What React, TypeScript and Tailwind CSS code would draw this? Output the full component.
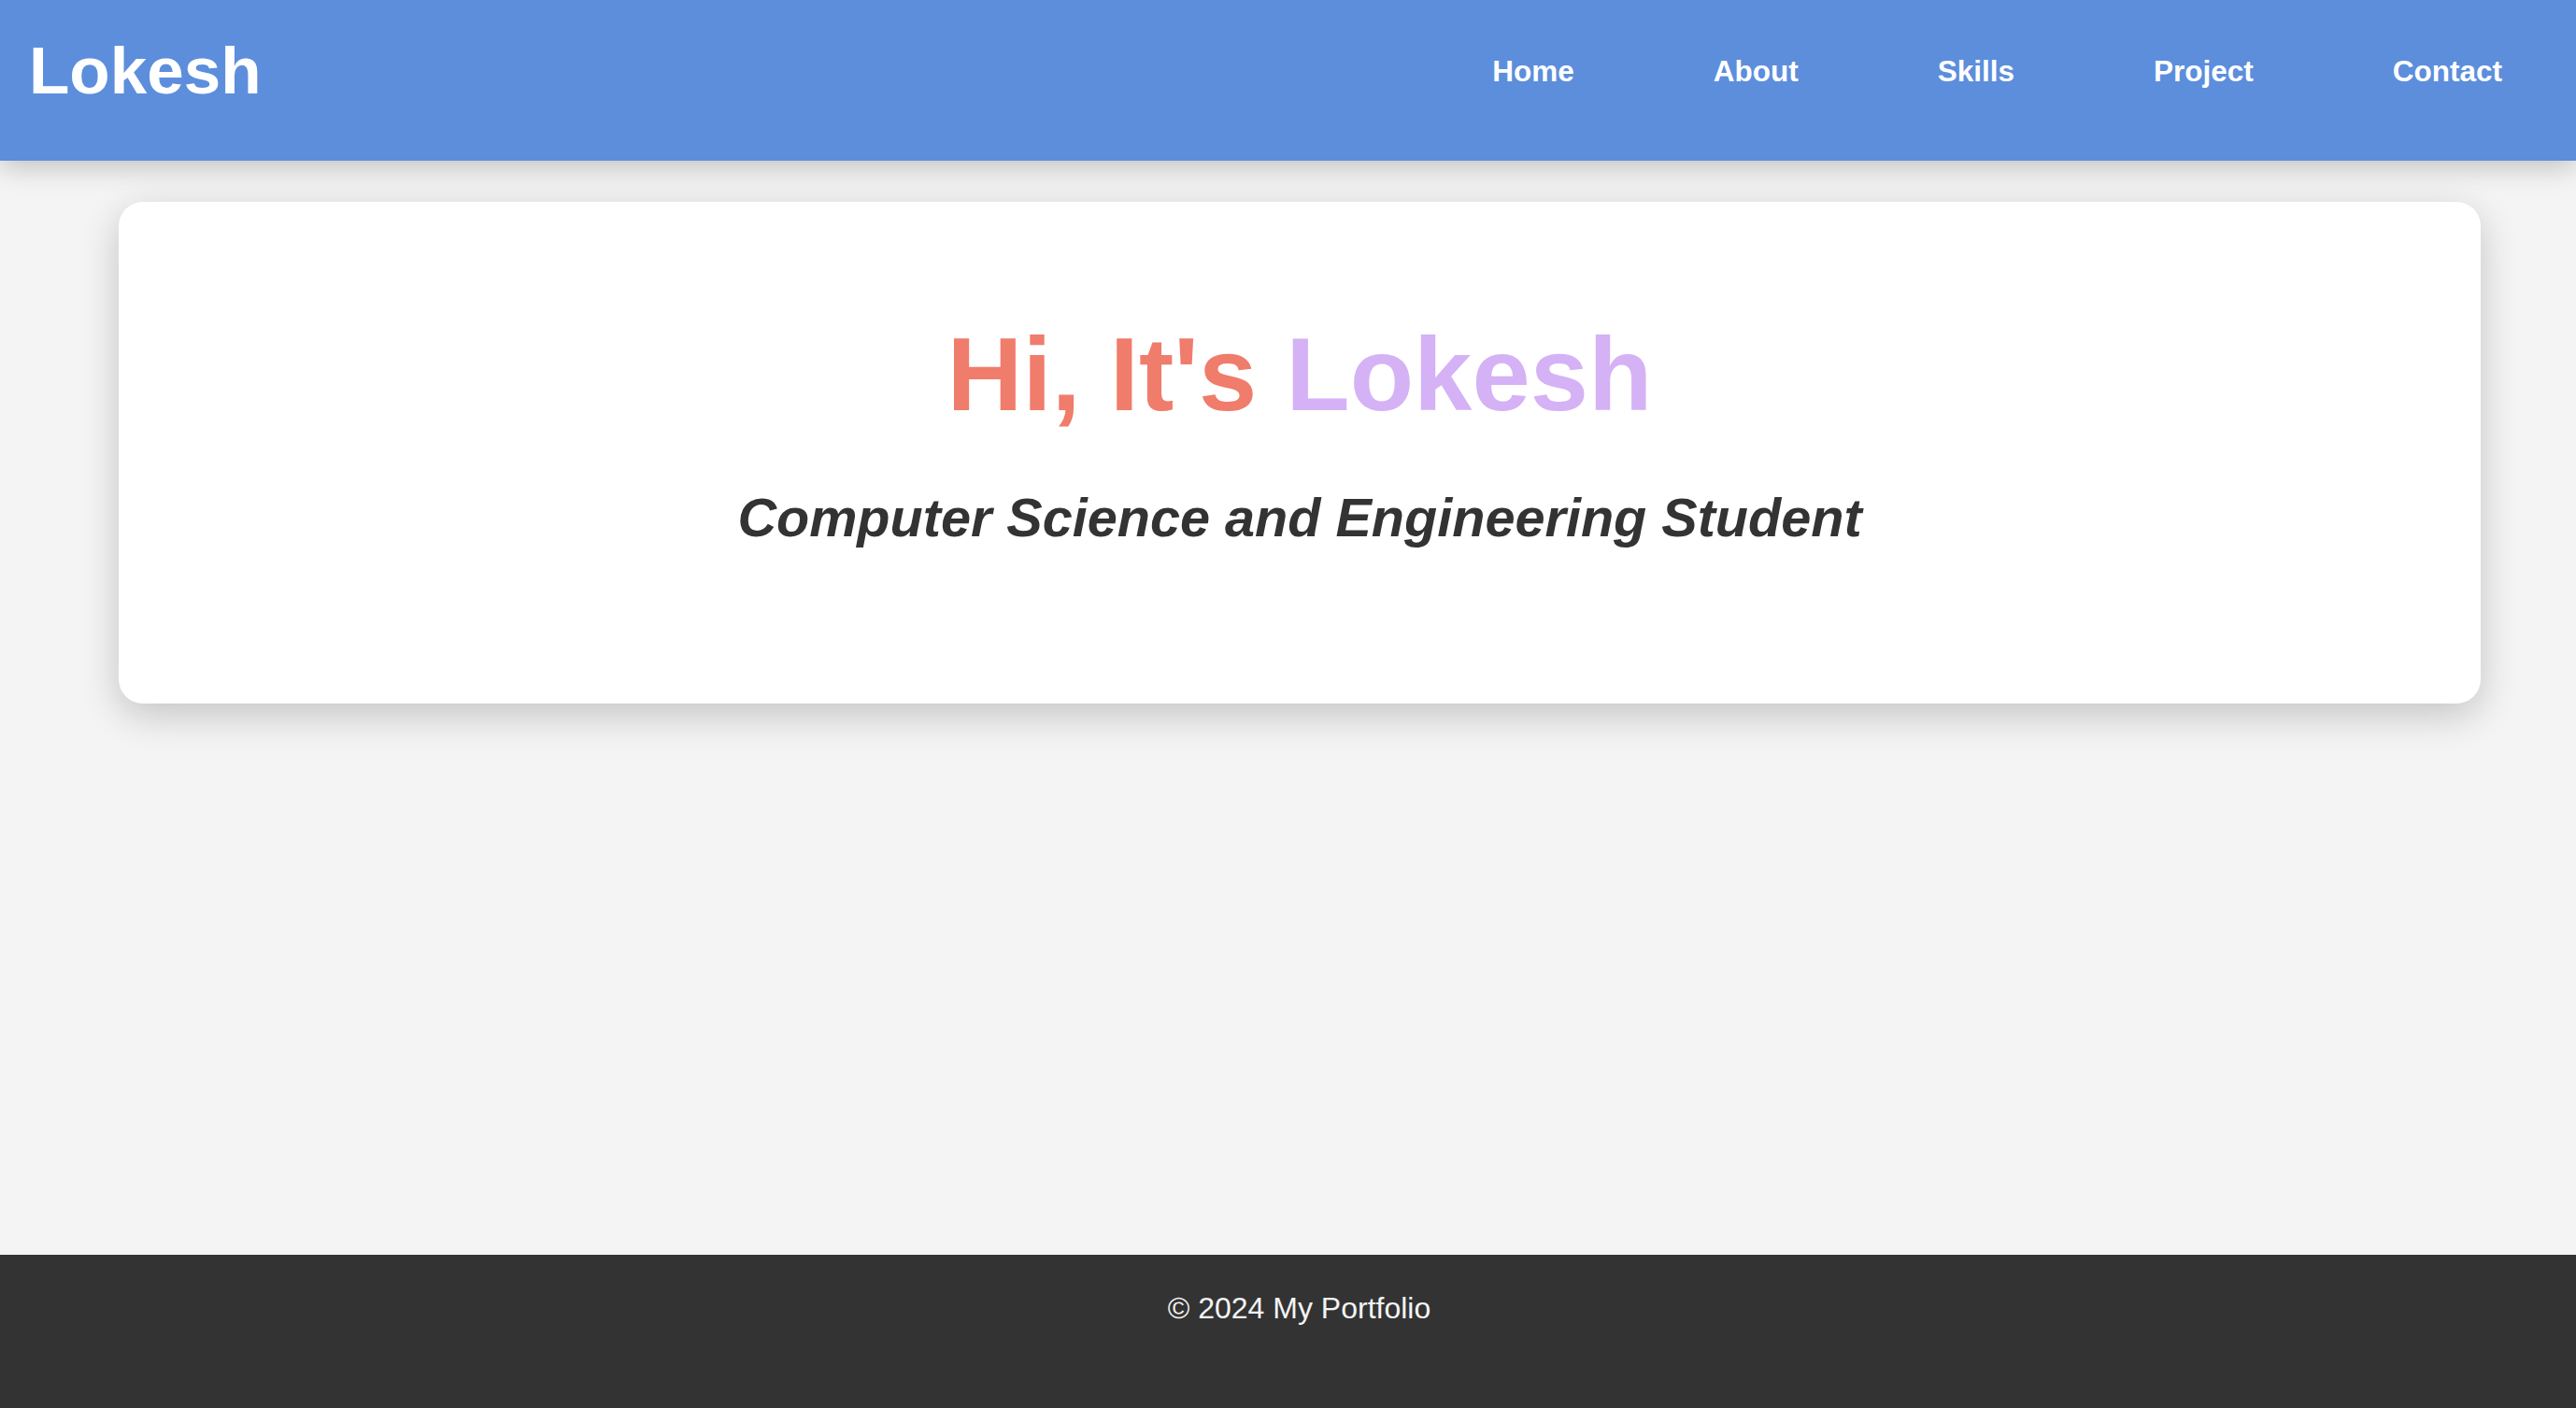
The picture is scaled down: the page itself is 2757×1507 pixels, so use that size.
import React from "react";

export default function App() {
  const font = { fontFamily: '"Liberation Sans", Arial, sans-serif' };
  const links = ["Home", "About", "Skills", "Project", "Contact"];
  return (
    <div className="min-h-screen flex flex-col bg-[#f4f4f4]" style={font}>
      <header className="relative z-10 h-[172px] bg-[#5c8edc] flex items-center justify-between pl-[31px] pr-[79px] pb-[20px] shadow-[0_6px_28px_rgba(0,0,0,0.22)]">
        <h1 className="text-white font-bold text-[71px] leading-[1.15]">Lokesh</h1>
        <nav>
          <ul className="flex gap-[149px]">
            {links.map((l) => (
              <li key={l}>
                <a href="#" className="text-white font-bold text-[31.5px] leading-[1.15]">
                  {l}
                </a>
              </li>
            ))}
          </ul>
        </nav>
      </header>
      <main className="flex-1 pl-[127px] pr-[102px] pt-[44px]">
        <section className="h-[537px] bg-white rounded-[26px] shadow-[0_12px_40px_rgba(0,0,0,0.2)] flex flex-col items-center pt-[121px]">
          <h2 className="font-bold text-[112px] leading-[1.15] whitespace-nowrap">
            <span className="text-[#f07c6c]">Hi, It's </span>
            <span className="text-[#d4b2f5]">Lokesh</span>
          </h2>
          <p className="mt-[55px] font-bold italic text-[57.6px] leading-[1.15] text-[#333333] whitespace-nowrap">
            Computer Science and Engineering Student
          </p>
        </section>
      </main>
      <footer className="h-[164px] bg-[#333333] flex justify-center pt-[39px] pl-[24px]">
        <p className="text-[32px] leading-[1.15] text-[#f4f4f4]">© 2024 My Portfolio</p>
      </footer>
    </div>
  );
}
